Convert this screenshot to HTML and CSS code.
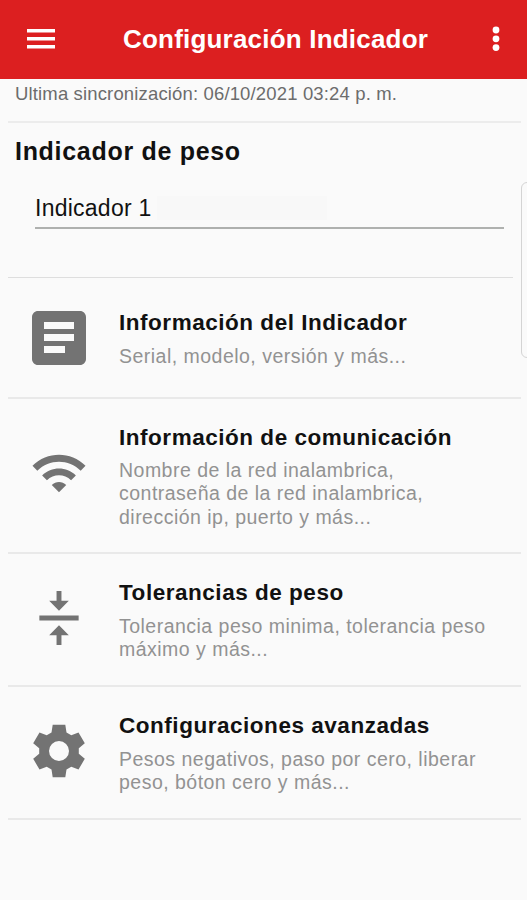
FILE: index.html
```html
<!DOCTYPE html>
<html lang="es">
<head>
  <meta charset="utf-8">
  <title>Configuración Indicador</title>
  <link rel="stylesheet" href="styles.css">
</head>
<body>
<header class="toolbar">
  <svg class="menu" viewBox="0 0 28 20"><path d="M0 0h28v3.6H0zM0 8h28v3.6H0zM0 16h28v3.6H0z"/></svg>
  <h1>Configuración Indicador</h1>
  <svg class="more" viewBox="0 0 8 26"><circle cx="4" cy="4" r="3.4"/><circle cx="4" cy="12.8" r="3.4"/><circle cx="4" cy="21.6" r="3.4"/></svg>
</header>

<p class="sync">Ultima sincronización: 06/10/2021 03:24 p. m.</p>

<section class="indicator">
  <h2>Indicador de peso</h2>
  <div class="field"><span>Indicador 1</span><i class="erased"></i></div>
</section>

<ul class="options">
  <li class="option info">
    <svg class="icon" viewBox="3 3 18 18"><path d="M19 3H5c-1.1 0-2 .9-2 2v14c0 1.1.9 2 2 2h14c1.1 0 2-.9 2-2V5c0-1.1-.9-2-2-2zm-5 14H7v-2.3h7v2.3zm3-4H7v-2.3h10v2.3zm0-4H7V6.7h10v2.3z"/></svg>
    <div class="text">
      <h3>Información del Indicador</h3>
      <p>Serial, modelo, versión y más...</p>
    </div>
  </li>
  <li class="option network">
    <svg class="icon" viewBox="0.8 1.2 22.4 22.4"><path d="M1 9l2 2c4.97-4.97 13.03-4.97 18 0l2-2C16.93 2.93 7.08 2.93 1 9zm8 8l3 3 3-3c-1.65-1.66-4.34-1.66-6 0zm-4-4l2 2c2.76-2.76 7.24-2.76 10 0l2-2C15.14 9.14 8.87 9.14 5 13z"/></svg>
    <div class="text">
      <h3>Información de comunicación</h3>
      <p>Nombre de la red inalambrica,<br>contraseña de la red inalambrica,<br>dirección ip, puerto y más...</p>
    </div>
  </li>
  <li class="option tolerance">
    <svg class="icon" viewBox="1 1 22 22"><path d="M8 19h3v4h2v-4h3l-4-4-4 4zm8-14h-3V1h-2v4H8l4 4 4-4zM4 11v2h16v-2H4z"/></svg>
    <div class="text">
      <h3>Tolerancias de peso</h3>
      <p>Tolerancia peso minima, tolerancia peso<br>máximo y más...</p>
    </div>
  </li>
  <li class="option advanced">
    <svg class="icon" viewBox="0 0 54 54"><path fill-rule="evenodd" stroke-linejoin="round" d="M20.7.8h12.6l1.2 7.7 4.8 2.8 7.2-2.8 6.3 10.7-6 5.1v5.4l6 5.1-6.3 10.7-7.2-2.8-4.8 2.8-1.2 7.7H20.7l-1.2-7.7-4.8-2.8-7.2 2.8-6.3-10.7 6-5.1v-5.4l-6-5.1L7.5 8.5l7.2 2.8 4.8-2.8zM27 17a10 10 0 1 0 0 20 10 10 0 0 0 0-20z"/></svg>
    <div class="text">
      <h3>Configuraciones avanzadas</h3>
      <p>Pesos negativos, paso por cero, liberar<br>peso, bóton cero y más...</p>
    </div>
  </li>
</ul>

<div class="scroll-edge"></div>
</body>
</html>
```

FILE: styles.css
```css
* {
  box-sizing: border-box;
}
body {
  margin: 0;
  position: relative;
  height: 900px;
  overflow: hidden;
  background: #fafafa;
  color: #111;
  font-family: "Liberation Sans", Arial, sans-serif;
}
h1, h2, h3, p, ul {
  margin: 0;
  padding: 0;
}

.toolbar {
  display: flex;
  align-items: center;
  height: 79px;
  padding: 0 27px 2px;
  background: #dc1f20;
  color: #fff;
  fill: #fff;
}
.toolbar h1 {
  margin-left: 68px;
  font-size: 26px;
  line-height: 30px;
  letter-spacing: 0.2px;
  white-space: nowrap;
}
.menu {
  width: 28px;
  height: 20px;
}
.more {
  width: 8px;
  height: 26px;
  margin-left: auto;
}

.sync {
  height: 44px;
  margin: 0 6px 0 8px;
  padding: 4px 0 0 7px;
  border-bottom: 2px solid #ececec;
  color: #6c6c6c;
  font-size: 18.5px;
  line-height: 22px;
  letter-spacing: 0.15px;
}

.indicator {
  height: 155px;
  margin: 0 14px 0 8px;
  padding: 13px 0 0 7px;
  border-bottom: 1px solid #dedede;
}
.indicator h2 {
  font-size: 25px;
  line-height: 30px;
  letter-spacing: 0.7px;
}
.field {
  display: flex;
  align-items: center;
  height: 43px;
  width: 469px;
  margin: 20px 0 0 20px;
  padding-top: 2px;
  border-bottom: 2px solid #afb1af;
  font-size: 23px;
  line-height: 26px;
  letter-spacing: 0.25px;
}
.erased {
  width: 170px;
  height: 24px;
  margin-left: 5px;
  background: #f8f8f8;
}

.options {
  list-style: none;
  margin: 0 6px 0 8px;
}
.option {
  display: flex;
  padding: 26px 0 0 24px;
  border-bottom: 2px solid #e9e9e9;
}
.icon {
  flex: none;
  width: 54px;
  height: 54px;
  margin: 11px 33px 0 0;
  fill: #737373;
}
.text h3 {
  font-size: 22.5px;
  line-height: 26px;
  letter-spacing: 0.53px;
}
.text p {
  margin-top: 9px;
  color: #929292;
  font-size: 19.5px;
  line-height: 23.3px;
  letter-spacing: 0.48px;
  white-space: nowrap;
}
.info {
  height: 121px;
  padding-top: 32px;
}
.info .icon {
  margin-top: 1px;
}
.network {
  height: 155px;
}
.network .text p {
  margin-top: 8px;
}
.network .icon {
  margin-top: 22px;
}
.tolerance {
  height: 133px;
}
.advanced {
  height: 133px;
}

/* edge of the panel that stays off screen */
.scroll-edge {
  position: absolute;
  top: 182px;
  right: -10px;
  width: 16px;
  height: 176px;
  border: 1px solid #d4d4d4;
  border-radius: 6px;
}
```
